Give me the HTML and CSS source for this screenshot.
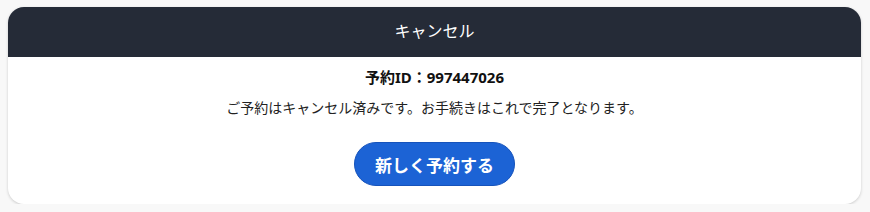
FILE: index.html
```html
<!DOCTYPE html>
<html lang="ja">
<head>
  <meta charset="UTF-8">
  <title>キャンセル</title>
  <link rel="stylesheet" href="styles.css">
</head>
<body>
  <div class="card">
    <div class="card-header">キャンセル</div>
    <div class="card-body">
      <p class="reserve-id">予約ID：997447026</p>
      <p class="message">ご予約はキャンセル済みです。お手続きはこれで完了となります。</p>
      <button class="btn-primary">新しく予約する</button>
    </div>
  </div>
</body>
</html>
```

FILE: styles.css
```css
:root {
  --dark: #252b37;
  --primary: #1c63d5;
  --bg: #f8f8f8;
  --text: #222;
}

body {
  margin: 0;
  padding: 7px 9px 0 8px;
  background: var(--bg);
  font-family: "Noto Sans", "Noto Sans CJK JP", sans-serif;
  color: var(--text);
}

.card {
  background: #fff;
  border-radius: 16px;
  overflow: hidden;
  box-shadow: 0 1px 3px rgba(0, 0, 0, 0.18);
}

.card-header {
  background: var(--dark);
  color: #fff;
  text-align: center;
  font-size: 16px;
  height: 50px;
  line-height: 49px;
}

.card-body {
  display: flex;
  flex-direction: column;
  align-items: center;
  padding: 9px 0 18px;
}

.reserve-id {
  margin: 0;
  font-size: 15px;
  font-weight: bold;
  color: #111;
  line-height: 22px;
}

.message {
  margin: 9px 0 0;
  font-size: 14px;
  line-height: 22px;
}

.btn-primary {
  margin-top: 23px;
  width: 161px;
  height: 44px;
  border: 1px solid #1653bb;
  border-radius: 22px;
  background: var(--primary);
  color: #fff;
  font-family: inherit;
  font-size: 17px;
  font-weight: bold;
  cursor: pointer;
}
```
